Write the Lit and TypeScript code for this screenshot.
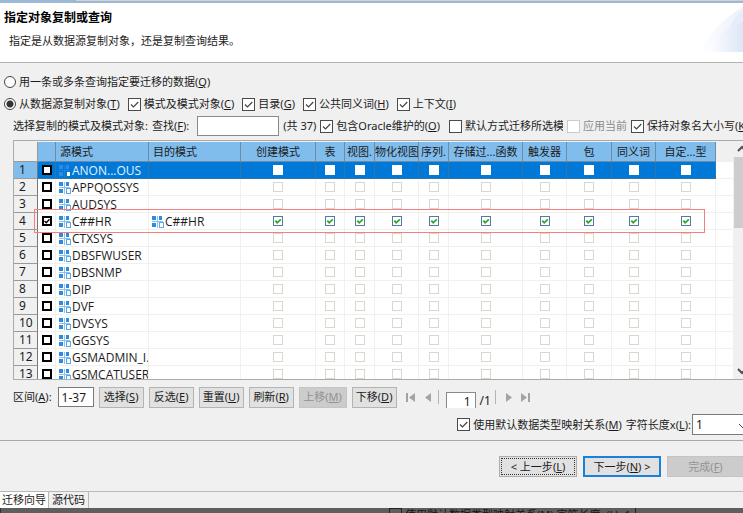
import { LitElement, html, css, svg, nothing } from "lit";
import { customElement } from "lit/decorators.js";

interface Column {
  title: string;
  cls: string;
}

const COLUMNS: Column[] = [
  { title: "创建模式", cls: "c75" },
  { title: "表", cls: "c29" },
  { title: "视图.", cls: "c30" },
  { title: "物化视图", cls: "c44" },
  { title: "序列.", cls: "c30" },
  { title: "存储过...函数", cls: "c74" },
  { title: "触发器", cls: "c44" },
  { title: "包", cls: "c45" },
  { title: "同义词", cls: "c44" },
  { title: "自定...型", cls: "c60" },
];

const SCHEMAS = [
  "ANON...OUS", "APPQOSSYS", "AUDSYS", "C##HR", "CTXSYS", "DBSFWUSER", "DBSNMP",
  "DIP", "DVF", "DVSYS", "GGSYS", "GSMADMIN_I.", "GSMCATUSER",
];

const SELECTED = 0;
const CHECKED = 3;

const key = (k: string) => html`(<u>${k}</u>)`;

const schemaIcon = (selected: boolean) => html`<svg class="icon ${selected ? "icon-sel" : ""}" viewBox="0 0 12 12" aria-hidden="true">
  ${svg`<g class="soft"><path d="M0 5.5H11M5.5 0V12" /></g>
  <g class="fill"><rect x="0" y="0" width="4" height="4" /><rect x="7" y="0" width="3" height="4" /><rect x="0" y="7" width="4" height="4" /></g>
  <rect class="box" x="7.5" y="6.5" width="4" height="5" />`}
</svg>`;

@customElement("app-root")
export class AppRoot extends LitElement {
  static styles = css`
    :host {
      display: block;
      overflow: hidden;
      background: #f0f0f0;
      color: #1c1c1c;
      font: 11px/16px "Noto Sans", "Noto Sans CJK SC", sans-serif;
      white-space: nowrap;
    }
    * { box-sizing: border-box; }
    button, input, select { font: inherit; color: inherit; margin: 0; border-radius: 0; }
    u { text-underline-offset: 1px; }
    .topbar { display: flex; height: 3px; background: #9cb8d4; }
    .topbar-rest { flex: 1; margin-left: 76px; height: 1px; background: #d2d2d2; }
    .banner {
      display: flex;
      justify-content: space-between;
      height: 60px;
      background: #fff;
      border-bottom: 1px solid #b4b4b4;
    }
    .banner-text { padding: 6px 4px; }
    h1 { margin: 0; font-size: 12px; line-height: 18px; font-weight: 700; color: #000; }
    .banner p { margin: 6px 0 0 5px; line-height: 16px; }
    .swoosh { width: 44px; height: 49px; flex: none; }

    .line { display: flex; align-items: center; height: 22px; padding-left: 4px; gap: 8px; }
    .first { margin-top: 8px; }
    .filters { padding-left: 13px; gap: 4px; }
    label { display: flex; align-items: center; gap: 3px; flex: none; }
    .clip { overflow: hidden; }
    .w98 { width: 98px; }
    .w44 { width: 44px; }
    .push { margin-left: 5px; }
    .dim { color: #8b8b8b; }
    .check {
      appearance: none;
      flex: none;
      width: 13px;
      height: 13px;
      border: 1px solid #4a4a4a;
      background: #fff;
    }
    .check:checked {
      background: #fff url("data:image/svg+xml,%3Csvg xmlns='http://www.w3.org/2000/svg' viewBox='0 0 11 11'%3E%3Cpath d='M2 5.5 4.5 8 9.3 3' fill='none' stroke='%23444' stroke-width='1.2'/%3E%3C/svg%3E") center / 11px 11px;
    }
    .check:disabled { border-color: #ccc; }
    .radio {
      appearance: none;
      flex: none;
      width: 12px;
      height: 12px;
      border: 1px solid #444;
      border-radius: 50%;
      background: #fff;
    }
    .radio:checked { background: radial-gradient(circle, #333 0 3px, #fff 4px); }
    .find { width: 82px; height: 20px; border: 1px solid #8a8a8a; background: #fff; margin-left: 5px; padding: 0 3px; }

    .grid-wrap {
      position: relative;
      display: flex;
      height: 240px;
      margin: 3px 0 0 13px;
      border: solid #a9abad;
      border-width: 1px 0 1px 1px;
      overflow: hidden;
      background: #fff;
    }
    .grid-view { flex: 1; min-width: 0; overflow: hidden; border-top: 1px solid #f0f0f0; }
    table { width: 100%; table-layout: fixed; border-collapse: separate; border-spacing: 0; }
    .c24 { width: 24px; }
    .c18 { width: 18px; }
    .c93 { width: 93px; }
    .c92 { width: 92px; }
    .c75 { width: 75px; }
    .c29 { width: 29px; }
    .c30 { width: 30px; }
    .c44 { width: 44px; }
    .c74 { width: 74px; }
    .c45 { width: 45px; }
    .c60 { width: 60px; }
    th, td { padding: 0; height: 17px; overflow: hidden; text-align: center; vertical-align: middle; font-weight: 400; line-height: 16px; }
    thead th { height: 20px; background: #80bcec; border-right: 1px solid #6b8ca8; border-bottom: 1px solid #6b8ca8; }
    thead .corner, thead .rest { background: #f0f0f0; border-color: #f0f0f0; }
    thead .corner { border-right-color: #999; border-bottom-color: #999; }
    thead .name { text-align: left; padding-left: 4px; }
    td { border-right: 1px solid #f0f0f0; border-bottom: 1px solid #f0f0f0; }
    .num { background: #f0f0f0; border-right: 1px solid #777; border-bottom: 1px solid #999; text-align: left; padding-left: 5px; font-size: 12px; }
    .selected .num { background: #80bcec; }
    .selected td { background: #0078d7; border-color: #3475a8; color: #e4f1fc; }
    .selected .rest { background: #fff; border-color: #f0f0f0; }
    .cell { display: flex; align-items: center; gap: 1px; height: 16px; padding: 1px 0 0 3px; font: 12px/15px "Open Sans", sans-serif; }
    .icon { width: 12px; height: 12px; flex: none; }
    .fill { fill: #2c8ae0; }
    .soft { stroke: #8cc0ee; fill: none; }
    .box { fill: #fff; stroke: #5aa6e6; }
    .icon-sel .fill { fill: #2e8be0; }
    .icon-sel .soft { stroke: #1b82da; }
    .icon-sel .box { stroke: #0078d7; }
    .pick, .flag { appearance: none; display: block; width: 10px; height: 10px; margin: 0 auto; background: #fff; }
    .pick { border: 2px solid #000; border-radius: 0; }
    .pick:checked {
      background: #fff url("data:image/svg+xml,%3Csvg xmlns='http://www.w3.org/2000/svg' viewBox='0 0 6 6'%3E%3Cpath d='M.5 3 2.3 4.8 5.5 1.2' fill='none' stroke='%23000' stroke-width='1.3'/%3E%3C/svg%3E") center / 6px 6px;
    }
    .flag { border: 1px solid #d8d8ce; }
    .selected .flag { border-color: #fff; }
    .flag:checked {
      border-color: #55799c;
      background: #fff url("data:image/svg+xml,%3Csvg xmlns='http://www.w3.org/2000/svg' viewBox='0 0 8 8'%3E%3Cpath d='M1.3 3.6 3.2 5.8 6.8 2.4' fill='none' stroke='%232fa52f' stroke-width='1.8'/%3E%3C/svg%3E") center / 8px 8px;
    }
    .scroll { flex: none; width: 9px; overflow: hidden; background: #f0f0f0; display: flex; flex-direction: column; }
    .scroll svg { width: 17px; height: 16px; flex: none; fill: none; stroke: #505050; stroke-width: 2; }
    .thumb { height: 71px; background: #cdcdcd; }
    .track { flex: 1; }
    .mark { position: absolute; left: 20px; top: 68px; width: 671px; height: 24px; border: 1px solid #f57f7f; }

    .tools { display: flex; align-items: center; height: 34px; padding-left: 13px; gap: 5px; }
    .tools label { gap: 6px; }
    .range { width: 36px; height: 20px; border: 1px solid #7a7a7a; background: #fff; padding: 0 3px; font-size: 12px; }
    .btn {
      height: 21px;
      padding: 0;
      border: 1px solid #b4b4b4;
      background: #e1e1e1;
      flex: none;
      line-height: 16px;
    }
    .tools .btn { width: 45px; }
    .tools .wide { width: 48px; }
    .btn:disabled { background: #ccc; border-color: #c4c4c4; color: #929292; }
    .pager { display: flex; align-items: center; height: 20px; }
    .nav { appearance: none; border: 0; padding: 0; background: none; width: 18px; height: 14px; display: flex; align-items: center; justify-content: center; }
    .nav svg { width: 12px; height: 10px; fill: #a3a3a3; }
    .bar { width: 1px; height: 14px; background: #b4b4b4; margin: 0 7px 0 0; }
    .bar2 { margin: 0 3px 0 4px; }
    .page { width: 30px; height: 16px; margin-top: 5px; border: 1px solid #8a8a8a; border-bottom: 0; background: #fff; text-align: right; padding: 2px 4px 0; font-size: 12px; line-height: 14px; }
    .total { padding: 8px 0 0 4px; font-size: 12px; }

    .mapping { display: flex; align-items: center; justify-content: flex-end; height: 27px; gap: 4px; margin-top: -3px; }
    .mapping .size { gap: 1px; }
    select {
      appearance: none;
      width: 51px;
      height: 21px;
      padding: 0 3px;
      border: 1px solid #7a7a7a;
      border-right: 0;
      font-size: 12px;
      background: #fff url("data:image/svg+xml,%3Csvg xmlns='http://www.w3.org/2000/svg' viewBox='0 0 10 6'%3E%3Cpath d='M1 1 5 5 9 1' fill='none' stroke='%23444'/%3E%3C/svg%3E") 45px 8px / 10px 6px no-repeat;
    }
    .actions {
      display: flex;
      justify-content: flex-end;
      gap: 6px;
      height: 51px;
      padding-top: 15px;
      margin-top: 2px;
      border-top: 1px solid #a8a8a8;
    }
    .actions .btn { width: 78px; font-size: 11px; }
    .actions .back { outline: 1px dotted #333; outline-offset: -3px; border-color: #adadad; }
    .actions .next { border: 2px solid #1a80d8; }
    .actions .done { width: 76px; border-right: 0; }
    .tabs { display: flex; height: 17px; border-top: 1px solid #b8b8b8; background: #f0f0f0; }
    .tab { border: 0; padding: 0 2px; background: #f0f0f0; height: 16px; line-height: 16px; border-right: 1px solid #b8b8b8; }
    .tab.active { background: #fff; }
    .tab + .tab { padding: 0 3px; }
    .under { display: flex; height: 5px; overflow: hidden; background: #5e5e5e; color: #151515; border-left: 1px solid #333; align-items: flex-start; }
    .under-text { display: flex; gap: 3px; margin-left: 388px; border-right: 1px solid #222; height: 5px; line-height: 13px; padding-right: 4px; }
    .under-text .check { border-color: #222; background-color: #5e5e5e; }
  `;

  private row(name: string, i: number) {
    const on = i === CHECKED;
    return html`<tr class=${i === SELECTED ? "selected" : ""}>
      <th class="num" scope="row">${i + 1}</th>
      <td><input class="pick" type="checkbox" aria-label=${name} ?checked=${on} /></td>
      <td><div class="cell">${schemaIcon(i === SELECTED)}<span>${name}</span></div></td>
      <td>${on ? html`<div class="cell">${schemaIcon(false)}<span>${name}</span></div>` : nothing}</td>
      ${COLUMNS.map((c) => html`<td><input class="flag" type="checkbox" aria-label="${name} ${c.title}" ?checked=${on} /></td>`)}
      <td class="rest"></td>
    </tr>`;
  }

  render() {
    return html`
      <div class="topbar"><div class="topbar-rest"></div></div>
      <header class="banner">
        <div class="banner-text">
          <h1>指定对象复制或查询</h1>
          <p>指定是从数据源复制对象，还是复制查询结果。</p>
        </div>
        <svg class="swoosh" viewBox="0 0 44 49" aria-hidden="true">
          <defs>
            <linearGradient id="fade"><stop offset="0" stop-color="#fff" /><stop offset="1" stop-color="#dde6f7" /></linearGradient>
          </defs>
          <path d="M0 49Q16 20 44 4V49Z" fill="url(#fade)" opacity=".6" />
          <path d="M8 49Q18 30 44 18V49Z" fill="url(#fade)" />
          <path d="M30 25Q35 15 44 7V18Z" fill="#e6edf9" />
        </svg>
      </header>

      <div class="line first">
        <label><input class="radio" type="radio" name="mode" /><span>用一条或多条查询指定要迁移的数据${key("Q")}</span></label>
      </div>
      <div class="line">
        <label><input class="radio" type="radio" name="mode" checked /><span>从数据源复制对象${key("T")}</span></label>
        <label><input class="check" type="checkbox" checked /><span>模式及模式对象${key("C")}</span></label>
        <label><input class="check" type="checkbox" checked /><span>目录${key("G")}</span></label>
        <label><input class="check" type="checkbox" checked /><span>公共同义词${key("H")}</span></label>
        <label><input class="check" type="checkbox" checked /><span>上下文${key("I")}</span></label>
      </div>
      <div class="line filters">
        <span>选择复制的模式及模式对象:</span>
        <label><span>查找${key("F")}:</span><input class="find" type="text" /></label>
        <span>(共 37)</span>
        <label><input class="check" type="checkbox" checked /><span>包含Oracle维护的${key("O")}</span></label>
        <label class="push"><input class="check" type="checkbox" /><span class="clip w98">默认方式迁移所选模</span></label>
        <label class="dim"><input class="check" type="checkbox" disabled /><span class="clip w44">应用当前</span></label>
        <label><input class="check" type="checkbox" checked /><span>保持对象名大小写${key("K")}</span></label>
      </div>

      <div class="grid-wrap">
        <div class="grid-view">
          <table>
            <thead>
              <tr>
                <th class="corner c24"></th>
                <th class="c18"></th>
                <th class="name c93">源模式</th>
                <th class="name c92">目的模式</th>
                ${COLUMNS.map((c) => html`<th class=${c.cls}>${c.title}</th>`)}
                <th class="rest"></th>
              </tr>
            </thead>
            <tbody>${SCHEMAS.map((s, i) => this.row(s, i))}</tbody>
          </table>
        </div>
        <div class="scroll">
          <svg viewBox="0 0 17 16"><path d="M4 10 8 6 12 10" /></svg>
          <div class="thumb"></div>
          <div class="track"></div>
          <svg viewBox="0 0 17 16"><path d="M4 6 8 10 12 6" /></svg>
        </div>
        <div class="mark"></div>
      </div>

      <div class="tools">
        <label><span>区间${key("A")}:</span><input class="range" type="text" value="1-37" /></label>
        <button class="btn">选择${key("S")}</button>
        <button class="btn">反选${key("E")}</button>
        <button class="btn">重置${key("U")}</button>
        <button class="btn">刷新${key("R")}</button>
        <button class="btn wide" disabled>上移${key("M")}</button>
        <button class="btn">下移${key("D")}</button>
        <div class="pager">
          <button class="nav" aria-label="首页"><svg viewBox="0 0 12 10"><path d="M1 1H3V10H1ZM10 1V10L4 5.5Z" /></svg></button>
          <button class="nav" aria-label="上一页"><svg viewBox="0 0 12 10"><path d="M8 1V10L2 5.5Z" /></svg></button>
          <span class="bar"></span>
          <input class="page" type="text" value="1" aria-label="页码" />
          <span class="total">/1</span>
          <span class="bar bar2"></span>
          <button class="nav" aria-label="下一页"><svg viewBox="0 0 12 10"><path d="M4 1V10L10 5.5Z" /></svg></button>
          <button class="nav" aria-label="末页"><svg viewBox="0 0 12 10"><path d="M1 1V10L7 5.5ZM8 1H10V10H8Z" /></svg></button>
        </div>
      </div>

      <div class="mapping">
        <label><input class="check" type="checkbox" checked /><span>使用默认数据类型映射关系${key("M")}</span></label>
        <label class="size"><span>字符长度x${key("L")}:</span><select><option>1</option></select></label>
      </div>

      <div class="actions">
        <button class="btn back">&lt; 上一步${key("L")}</button>
        <button class="btn next">下一步${key("N")} &gt;</button>
        <button class="btn done" disabled>完成${key("F")}</button>
      </div>
      <nav class="tabs">
        <button class="tab active">迁移向导</button>
        <button class="tab">源代码</button>
      </nav>
      <div class="under" aria-hidden="true">
        <div class="under-text"><input class="check" type="checkbox" tabindex="-1" /><span>使用默认数据类型映射关系(M) 字符长度x(L): 1</span></div>
      </div>
    `;
  }
}
